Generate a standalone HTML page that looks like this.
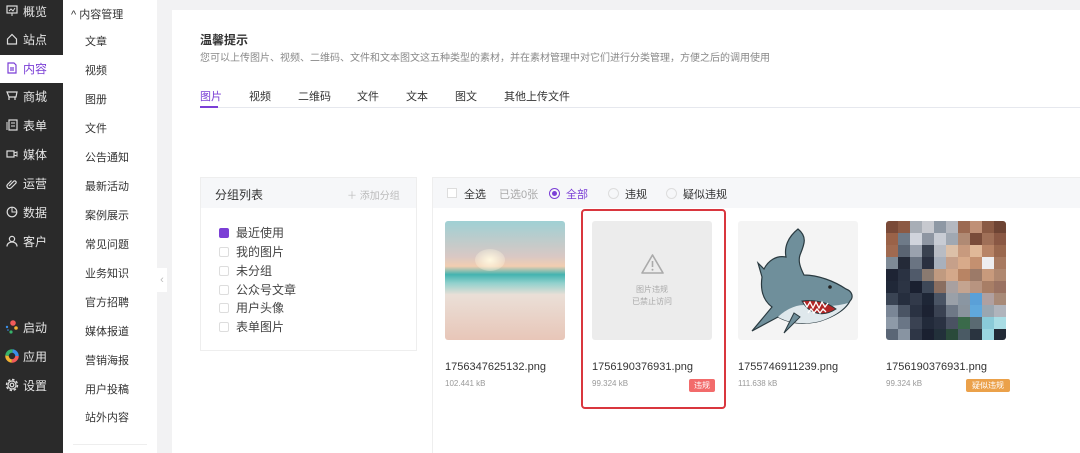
<!DOCTYPE html>
<html><head><meta charset="utf-8"><style>
*{margin:0;padding:0;box-sizing:border-box}
html,body{width:1080px;height:453px;overflow:hidden}
body{background:#f2f2f3;font-family:"Liberation Sans","Noto Sans CJK SC",sans-serif;position:relative;color:#333}
.side{position:absolute;left:0;top:0;width:63px;height:453px;background:#2a2a2a}
.si{position:absolute;left:0;width:63px;height:28px;color:#e6e6e6;font-size:12px;line-height:28px;padding-left:23px}
.si svg{position:absolute;left:6px;top:7px}
.si.act{background:#fff;color:#7b3fd6}
.sub{position:absolute;left:63px;top:0;width:94px;height:453px;background:#fff}
.sub div{position:absolute;left:22px;font-size:11px;color:#333}
.card{position:absolute;left:172px;top:10px;width:908px;height:443px;background:#fff;overflow:hidden}
.abs{position:absolute}
.tab{position:absolute;top:78px;font-size:11px;color:#333}
.chk{display:inline-block;width:10px;height:10px;border:1px solid #ddd;border-radius:2px;vertical-align:-1px;margin-right:7px;background:#fff}
.gi{position:absolute;left:18px;font-size:12px;color:#444}
.rad{position:absolute;width:11px;height:11px;border:1px solid #ddd;border-radius:50%}
.fn{position:absolute;font-size:11px;color:#333}
.sz{position:absolute;font-size:8px;color:#999}
.pix{display:grid;grid-template-columns:repeat(10,12px);grid-auto-rows:12px;overflow:hidden}
</style></head><body>
<div class="side">
<div class="si" style="top:-2px"><svg width="12" height="12"><rect x="1" y="1" width="10" height="7" fill="none" stroke="#ddd" stroke-width="1.2"/><path d="M3 6l2-2 2 2 2-3M6 8v3" stroke="#ddd" fill="none"/></svg>概览</div>
<div class="si" style="top:26px"><svg width="12" height="12"><path d="M1.5 6L6 1.5 10.5 6v5h-9z" fill="none" stroke="#ddd" stroke-width="1.2"/></svg>站点</div>
<div class="si act" style="top:55px"><svg width="12" height="12"><path d="M2 1h6l2 2v8H2z M4 6h4M4 8h4" fill="none" stroke="#7b3fd6" stroke-width="1.2"/></svg>内容</div>
<div class="si" style="top:83px"><svg width="12" height="12"><path d="M1 2h10l-1 5H3zM3 7v3M9 7v3" fill="none" stroke="#ddd" stroke-width="1.2"/></svg>商城</div>
<div class="si" style="top:112px"><svg width="12" height="12"><rect x="3" y="1" width="8" height="10" fill="none" stroke="#ddd" stroke-width="1.2"/><path d="M1 3v8M5 4h4M5 7h4" stroke="#ddd"/></svg>表单</div>
<div class="si" style="top:141px"><svg width="12" height="12"><rect x="1" y="3" width="7" height="6" fill="none" stroke="#ddd" stroke-width="1.2"/><path d="M8 5l3-1v4l-3-1" fill="none" stroke="#ddd"/></svg>媒体</div>
<div class="si" style="top:170px"><svg width="12" height="12"><path d="M3 9l5-5a1.5 1.5 0 012 2l-5 5a2.5 2.5 0 01-3.5-3.5l4-4" fill="none" stroke="#ddd" stroke-width="1.2"/></svg>运营</div>
<div class="si" style="top:199px"><svg width="12" height="12"><circle cx="6" cy="6" r="4.8" fill="none" stroke="#ddd" stroke-width="1.2"/><path d="M6 1.5V6h4.5" fill="none" stroke="#ddd"/></svg>数据</div>
<div class="si" style="top:228px"><svg width="12" height="12"><circle cx="6" cy="4" r="2.6" fill="none" stroke="#ddd" stroke-width="1.2"/><path d="M1 11.5c0-3 2.5-4.5 5-4.5s5 1.5 5 4.5" fill="none" stroke="#ddd" stroke-width="1.2"/></svg>客户</div>
<div class="si" style="top:314px"><svg width="14" height="14" style="left:5px;top:6px"><circle cx="8" cy="3" r="2.8" fill="#f05a5a"/><circle cx="11" cy="8" r="1.8" fill="#f2b233"/><circle cx="6" cy="12" r="1.6" fill="#37b36b"/><circle cx="2" cy="7" r="1.2" fill="#3a8ee6"/><circle cx="3" cy="10" r="0.8" fill="#3a8ee6"/></svg>启动</div>
<div class="si" style="top:343px"><svg width="14" height="14" style="left:5px;top:6px"><circle cx="7" cy="7" r="5" fill="none" stroke="#f05a5a" stroke-width="3.5" stroke-dasharray="8 24"/><circle cx="7" cy="7" r="5" fill="none" stroke="#f2b233" stroke-width="3.5" stroke-dasharray="0 8 8 24"/><circle cx="7" cy="7" r="5" fill="none" stroke="#37b36b" stroke-width="3.5" stroke-dasharray="0 16 8 24"/><circle cx="7" cy="7" r="5" fill="none" stroke="#3a8ee6" stroke-width="3.5" stroke-dasharray="0 24 8 24"/></svg>应用</div>
<div class="si" style="top:372px"><svg width="14" height="14" style="left:5px;top:6px"><circle cx="7" cy="7" r="5.5" fill="none" stroke="#ddd" stroke-width="1.4" stroke-dasharray="2.5 1.8"/><circle cx="7" cy="7" r="4" fill="none" stroke="#ddd" stroke-width="1.2"/><circle cx="7" cy="7" r="1.8" fill="none" stroke="#ddd" stroke-width="1.2"/></svg>设置</div>
</div>
<div class="sub">
<div style="top:6px;left:8px;font-size:11px">^ 内容管理</div>
<div style="top:33px">文章</div><div style="top:62px">视频</div><div style="top:91px">图册</div><div style="top:120px">文件</div>
<div style="top:149px">公告通知</div><div style="top:178px">最新活动</div><div style="top:207px">案例展示</div><div style="top:236px">常见问题</div>
<div style="top:265px">业务知识</div><div style="top:294px">官方招聘</div><div style="top:323px">媒体报道</div><div style="top:352px">营销海报</div>
<div style="top:381px">用户投稿</div><div style="top:409px">站外内容</div>
<div style="top:444px;left:10px;width:74px;height:1px;background:#eee"></div>
</div>
<div class="abs" style="left:157px;top:268px;width:10px;height:24px;background:#fff;color:#bbb;font-size:11px;line-height:24px;text-align:center">‹</div>
<div class="card">
<div class="abs" style="left:28px;top:21px;font-size:12px;font-weight:bold;color:#333">温馨提示</div>
<div class="abs" style="left:28px;top:39px;font-size:10px;color:#888">您可以上传图片、视频、二维码、文件和文本图文这五种类型的素材，并在素材管理中对它们进行分类管理，方便之后的调用使用</div>
<div class="tab" style="left:28px;color:#7b3fd6">图片</div>
<div class="tab" style="left:77px">视频</div><div class="tab" style="left:126px">二维码</div><div class="tab" style="left:185px">文件</div>
<div class="tab" style="left:234px">文本</div><div class="tab" style="left:283px">图文</div><div class="tab" style="left:332px">其他上传文件</div>
<div class="abs" style="left:28px;top:97px;width:880px;height:1px;background:#e6e8ee"></div>
<div class="abs" style="left:28px;top:96px;width:18px;height:2px;background:#7b3fd6"></div>
<div class="abs" style="left:28px;top:167px;width:217px;height:174px;border:1px solid #eee;background:#fff">
<div class="abs" style="left:0;top:0;width:215px;height:30px;background:#f6f7f9"></div>
<div class="abs" style="left:14px;top:8px;font-size:12px;color:#333">分组列表</div>
<div class="abs" style="left:146px;top:9px;font-size:10px;color:#bbb">＋ 添加分组</div>
<div class="gi" style="top:46px"><span class="chk" style="background:#7b3fd6;border-color:#7b3fd6"></span>最近使用</div>
<div class="gi" style="top:65px"><span class="chk"></span>我的图片</div>
<div class="gi" style="top:84px"><span class="chk"></span>未分组</div>
<div class="gi" style="top:103px"><span class="chk"></span>公众号文章</div>
<div class="gi" style="top:121px"><span class="chk"></span>用户头像</div>
<div class="gi" style="top:140px"><span class="chk"></span>表单图片</div>
</div>
<div class="abs" style="left:260px;top:167px;width:650px;height:280px;border:1px solid #eee;background:#fff">
<div class="abs" style="left:0;top:0;width:650px;height:30px;background:#f6f7f9"></div>
<div class="abs" style="left:14px;top:10px;width:10px;height:10px;border:1px solid #ddd;background:#fff"></div>
<div class="abs" style="left:31px;top:8px;font-size:11px;color:#333">全选</div>
<div class="abs" style="left:66px;top:8px;font-size:11px;color:#aaa">已选0张</div>
<div class="rad" style="left:116px;top:10px;border-color:#7b3fd6"><div style="margin:2px;width:5px;height:5px;border-radius:50%;background:#7b3fd6"></div></div>
<div class="abs" style="left:133px;top:8px;font-size:11px;color:#7b3fd6">全部</div>
<div class="rad" style="left:175px;top:10px"></div>
<div class="abs" style="left:192px;top:8px;font-size:11px;color:#333">违规</div>
<div class="rad" style="left:233px;top:10px"></div>
<div class="abs" style="left:250px;top:8px;font-size:11px;color:#333">疑似违规</div>
</div>
<div class="abs" style="left:273px;top:211px;width:120px;height:119px;border-radius:3px;background:linear-gradient(180deg,#9fd0d4 0%,#d9c8c4 30%,#f2cdb0 38%,#43b3b0 45%,#8fd0cc 52%,#eadfd7 62%,#e8c6b8 100%)"><div style="position:absolute;left:30px;top:28px;width:30px;height:22px;border-radius:50%;background:radial-gradient(#fff8e0,rgba(255,230,190,0))"></div></div>
<div class="abs" style="left:409px;top:199px;width:145px;height:200px;border:2px solid #d9363e;border-radius:4px"></div>
<div class="abs" style="left:420px;top:211px;width:120px;height:119px;border-radius:3px;background:#ececec">
<svg class="abs" style="left:48px;top:32px" width="25" height="22"><path d="M12.5 2L23 20H2z" fill="none" stroke="#aaa" stroke-width="1.6" stroke-linejoin="round"/><path d="M12.5 8v6" stroke="#aaa" stroke-width="1.6"/><circle cx="12.5" cy="16.8" r="1" fill="#aaa"/></svg>
<div class="abs" style="left:0;top:63px;width:120px;text-align:center;font-size:8px;color:#aaa;line-height:12px">图片违规<br>已禁止访问</div></div>
<div class="abs" style="left:566px;top:211px;width:120px;height:119px;border-radius:3px;background:#f4f4f4">
<svg width="120" height="119">
<path d="M60 8 C50 16 46 26 48 36 C38 34 30 40 26 48 L20 42 L24 56 C22 70 26 80 34 86 L14 110 L40 96 C54 104 74 104 88 98 C98 94 108 88 112 80 C116 76 114 70 108 68 C96 60 80 54 66 54 C62 46 60 40 62 34 C66 24 70 16 60 8 Z" fill="#6f8f9b" stroke="#2a3a40" stroke-width="1.2"/>
<path d="M40 96 C54 104 74 104 88 98 C98 94 106 88 110 82 C96 86 80 86 66 84 C56 84 46 90 40 96 Z" fill="#dfe8ec"/>
<path d="M64 80 C72 94 86 96 98 88 C90 82 78 78 64 80 Z" fill="#b22626" stroke="#2a3a40" stroke-width="1"/>
<path d="M66 81l3 5 3-5 3 6 3-6 3 6 3-6 3 5 3-4 M70 92l3-4 3 4 3-4 3 4 3-4 3 3" fill="none" stroke="#fff" stroke-width="1.3"/>
<circle cx="92" cy="66" r="1.8" fill="#222"/>
<path d="M56 92 L46 112 L62 96 Z" fill="#6f8f9b" stroke="#2a3a40"/>
</svg></div>
<div class="abs pix" style="left:714px;top:211px;width:120px;height:119px;border-radius:3px">
<i style="background:#7a4a38"></i><i style="background:#8c5a44"></i><i style="background:#a8aeb6"></i><i style="background:#c7c9cf"></i><i style="background:#8e98a4"></i><i style="background:#b4b8c0"></i><i style="background:#9c6a52"></i><i style="background:#c09076"></i><i style="background:#8a5a44"></i><i style="background:#6e4434"></i>
<i style="background:#9a6248"></i><i style="background:#6e7a88"></i><i style="background:#d0d4dc"></i><i style="background:#8e96a2"></i><i style="background:#c8ccd4"></i><i style="background:#a0a8b2"></i><i style="background:#b08a74"></i><i style="background:#7a4c3a"></i><i style="background:#a07058"></i><i style="background:#8a5844"></i>
<i style="background:#a06a50"></i><i style="background:#5a6472"></i><i style="background:#9aa2ae"></i><i style="background:#3a4250"></i><i style="background:#b8bcc4"></i><i style="background:#dcc0a8"></i><i style="background:#c89a7e"></i><i style="background:#e0b898"></i><i style="background:#b88466"></i><i style="background:#9a684e"></i>
<i style="background:#7e8a96"></i><i style="background:#242a38"></i><i style="background:#6a7482"></i><i style="background:#2a3040"></i><i style="background:#a8b0bc"></i><i style="background:#c6a08a"></i><i style="background:#d8aa8a"></i><i style="background:#c49070"></i><i style="background:#eeeef0"></i><i style="background:#a87a60"></i>
<i style="background:#1e2434"></i><i style="background:#2a3242"></i><i style="background:#505a6a"></i><i style="background:#8a7a70"></i><i style="background:#c09a80"></i><i style="background:#d4a88a"></i><i style="background:#b88464"></i><i style="background:#9c7a68"></i><i style="background:#c89a7c"></i><i style="background:#b08870"></i>
<i style="background:#202838"></i><i style="background:#2c3444"></i><i style="background:#1a2030"></i><i style="background:#3e4858"></i><i style="background:#8a6e60"></i><i style="background:#a8a0a0"></i><i style="background:#c4a490"></i><i style="background:#b89480"></i><i style="background:#a87e66"></i><i style="background:#9a7262"></i>
<i style="background:#3a4454"></i><i style="background:#262e3e"></i><i style="background:#323a4a"></i><i style="background:#1e2636"></i><i style="background:#4a5464"></i><i style="background:#9aa0a8"></i><i style="background:#8a96a2"></i><i style="background:#5aa0d8"></i><i style="background:#b0a0a0"></i><i style="background:#a88a78"></i>
<i style="background:#7a8696"></i><i style="background:#4a5464"></i><i style="background:#2a3242"></i><i style="background:#1c2232"></i><i style="background:#3a4252"></i><i style="background:#6e7886"></i><i style="background:#8a949e"></i><i style="background:#60a8dc"></i><i style="background:#9aa6b0"></i><i style="background:#b0b4bc"></i>
<i style="background:#8e9aa8"></i><i style="background:#6a7686"></i><i style="background:#3a4252"></i><i style="background:#222a3a"></i><i style="background:#2a3242"></i><i style="background:#4a5262"></i><i style="background:#3a6a4a"></i><i style="background:#5a6a72"></i><i style="background:#8acad8"></i><i style="background:#a8dce4"></i>
<i style="background:#5a6676"></i><i style="background:#8894a2"></i><i style="background:#2e3646"></i><i style="background:#1a2030"></i><i style="background:#22303a"></i><i style="background:#2a4a3a"></i><i style="background:#4a5a64"></i><i style="background:#2a3440"></i><i style="background:#9ad6e0"></i><i style="background:#222a36"></i>
</div>
<div class="fn" style="left:273px;top:351px">1756347625132.png</div><div class="sz" style="left:273px;top:369px">102.441 kB</div>
<div class="fn" style="left:420px;top:351px">1756190376931.png</div><div class="sz" style="left:420px;top:369px">99.324 kB</div>
<div class="abs" style="left:517px;top:369px;width:26px;height:13px;background:#f26b6b;border-radius:2px;color:#fff;font-size:8px;text-align:center;line-height:13px">违规</div>
<div class="fn" style="left:566px;top:351px">1755746911239.png</div><div class="sz" style="left:566px;top:369px">111.638 kB</div>
<div class="fn" style="left:714px;top:351px">1756190376931.png</div><div class="sz" style="left:714px;top:369px">99.324 kB</div>
<div class="abs" style="left:794px;top:369px;width:44px;height:13px;background:#eba14a;border-radius:2px;color:#fff;font-size:8px;text-align:center;line-height:13px">疑似违规</div>
</div>
</body></html>
